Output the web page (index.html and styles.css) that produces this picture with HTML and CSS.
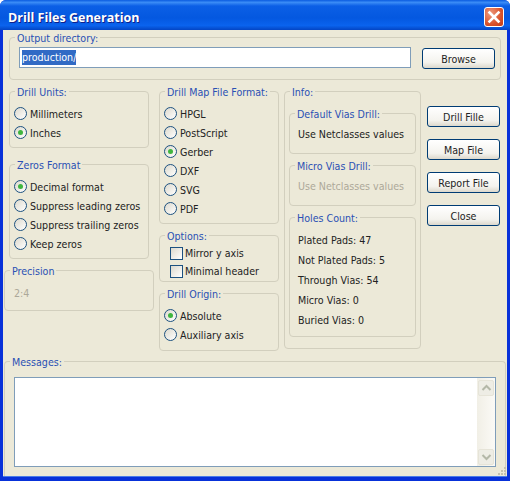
FILE: index.html
```html
<!DOCTYPE html>
<html lang="en">
<head>
    <meta charset="UTF-8">
    <title>Drill Files Generation</title>
    <link rel="stylesheet" href="styles.css">
</head>
<body>
    <div class="window">
        <div class="titlebar">
            <span class="title">Drill Files Generation</span>
            <span class="close-btn">
                <svg width="14" height="14" viewBox="0 0 14 14"><path d="M2.5 2.5 L11.5 11.5 M11.5 2.5 L2.5 11.5" stroke="#fff" stroke-width="2.6" stroke-linecap="square" fill="none"/></svg>
            </span>
        </div>
        <div class="content">
            <fieldset class="group output">
                <legend>Output directory:</legend>
                <div class="output-row">
                    <div class="path"><span class="selected">production/</span></div>
                    <button class="btn browse">Browse</button>
                </div>
            </fieldset>

            <div class="main">
                <div class="col col-1">
                    <fieldset class="group units">
                        <legend>Drill Units:</legend>
                        <div class="opt"><i class="radio"></i>Millimeters</div>
                        <div class="opt"><i class="radio on"></i>Inches</div>
                    </fieldset>
                    <fieldset class="group zeros">
                        <legend>Zeros Format</legend>
                        <div class="opt"><i class="radio on"></i>Decimal format</div>
                        <div class="opt"><i class="radio"></i>Suppress leading zeros</div>
                        <div class="opt"><i class="radio"></i>Suppress trailing zeros</div>
                        <div class="opt"><i class="radio"></i>Keep zeros</div>
                    </fieldset>
                    <fieldset class="group precision">
                        <legend>Precision</legend>
                        <div class="disabled">2:4</div>
                    </fieldset>
                </div>

                <div class="col col-2">
                    <fieldset class="group map">
                        <legend>Drill Map File Format:</legend>
                        <div class="opt"><i class="radio"></i>HPGL</div>
                        <div class="opt"><i class="radio"></i>PostScript</div>
                        <div class="opt"><i class="radio on"></i>Gerber</div>
                        <div class="opt"><i class="radio"></i>DXF</div>
                        <div class="opt"><i class="radio"></i>SVG</div>
                        <div class="opt"><i class="radio"></i>PDF</div>
                    </fieldset>
                    <fieldset class="group options">
                        <legend>Options:</legend>
                        <div class="chk"><i class="box"></i>Mirror y axis</div>
                        <div class="chk"><i class="box"></i>Minimal header</div>
                    </fieldset>
                    <fieldset class="group origin">
                        <legend>Drill Origin:</legend>
                        <div class="opt"><i class="radio on"></i>Absolute</div>
                        <div class="opt"><i class="radio"></i>Auxiliary axis</div>
                    </fieldset>
                </div>

                <fieldset class="group info">
                    <legend>Info:</legend>
                    <fieldset class="group vias">
                        <legend>Default Vias Drill:</legend>
                        <div class="value">Use Netclasses values</div>
                    </fieldset>
                    <fieldset class="group vias">
                        <legend>Micro Vias Drill:</legend>
                        <div class="value disabled">Use Netclasses values</div>
                    </fieldset>
                    <fieldset class="group holes">
                        <legend>Holes Count:</legend>
                        <div class="count">Plated Pads: 47</div>
                        <div class="count">Not Plated Pads: 5</div>
                        <div class="count">Through Vias: 54</div>
                        <div class="count">Micro Vias: 0</div>
                        <div class="count">Buried Vias: 0</div>
                    </fieldset>
                </fieldset>

                <div class="actions">
                    <button class="btn">Drill Fille</button>
                    <button class="btn">Map File</button>
                    <button class="btn">Report File</button>
                    <button class="btn">Close</button>
                </div>
            </div>

            <fieldset class="group messages">
                <legend>Messages:</legend>
                <div class="log">
                    <div class="scrollbar">
                        <span class="arrow">
                            <svg width="11" height="8" viewBox="0 0 11 8"><path d="M1.5 6 L5.5 2 L9.5 6" stroke="#b4b8a8" stroke-width="2" fill="none"/></svg>
                        </span>
                        <span class="arrow">
                            <svg width="11" height="8" viewBox="0 0 11 8"><path d="M1.5 2 L5.5 6 L9.5 2" stroke="#b4b8a8" stroke-width="2" fill="none"/></svg>
                        </span>
                    </div>
                </div>
            </fieldset>
            <svg class="grip" width="9" height="9" viewBox="0 0 9 9"><path d="M6 0h2v2h-2z M3 3h2v2h-2z M6 3h2v2h-2z M0 6h2v2h-2z M3 6h2v2h-2z M6 6h2v2h-2z" fill="#c4c1ae"/></svg>
        </div>
    </div>
</body>
</html>
```

FILE: styles.css
```css
*{margin:0;padding:0;box-sizing:border-box}
html,body{
    width: 510px;
    height: 481px;
    overflow: hidden;
}
body{
    font-family: "DejaVu Sans", sans-serif;
    font-stretch: condensed;
    font-size: 10.6px;
    color: #222;
}
.window{
    width: 510px;
    height: 481px;
    display: flex;
    flex-direction: column;
    background-color: #0831d9;
    border-radius: 6px 6px 0 0;
    padding: 0 3px 5px 3px;
}
.titlebar{
    height: 30px;
    margin: 0 -3px;
    padding: 4px 6px 0 8px;
    display: flex;
    align-items: center;
    justify-content: space-between;
    border-radius: 6px 6px 0 0;
    background: linear-gradient(to bottom, #0a5be0 0%, #3a8cf6 8%, #0b5fe6 20%, #0458e0 60%, #0a63ee 85%, #0345c4 100%);
}
.title{
    font-family: "Open Sans", sans-serif;
    font-stretch: normal;
    font-weight: bold;
    font-size: 12.5px;
    color: #fff;
    text-shadow: 1px 1px 0 #0f1f8a;
}
.close-btn{
    width: 20px;
    height: 20px;
    display: flex;
    align-items: center;
    justify-content: center;
    border: 1px solid #fff;
    border-radius: 3px;
    background: radial-gradient(circle at 30% 30%, #ee9a7e, #d9532c 60%, #c23a14);
}
.content{
    flex: 1;
    position: relative;
    background-color: #ece9d8;
    display: flex;
    flex-direction: column;
    min-height: 0;
    box-shadow: 0 1px 0 #4a7ce8;
}
.group{
    border: 1px solid #d2cfbe;
    border-radius: 4px;
    min-width: 0;
}
.group > legend{
    margin-left: 5px;
    padding: 1px 2px 0 2px;
    line-height: 14px;
    color: #2a50b4;
}
.output{
    height: 50px;
    margin: 0 6px;
    padding-top: 2px;
}
.output-row{
    display: flex;
    gap: 11px;
    margin-left: 9px;
}
.path{
    width: 392px;
    height: 21px;
    background-color: #fff;
    border: 1px solid #7f9db9;
    padding: 2px;
    line-height: 15px;
}
.selected{
    display: inline-block;
    background-color: #316ac5;
    color: #fff;
    height: 15px;
}
.btn{
    width: 73px;
    height: 21px;
    font: inherit;
    font-stretch: condensed;
    color: #222;
    border: 1px solid #003c74;
    border-radius: 3px;
    background: linear-gradient(to bottom, #fff 0%, #f4f3ee 70%, #dcd8cc 100%);
}
.browse{
    margin-top: 1px;
}
.main{
    display: flex;
    margin-top: 4px;
    padding-left: 1px;
    gap: 5px;
}
.col{
    display: flex;
    flex-direction: column;
}
.col-1{
    width: 150px;
}
.col-2{
    width: 120px;
    gap: 4px;
}
.units{
    height: 64px;
    margin: 0 5px;
    padding-top: 5px;
}
.zeros{
    height: 102px;
    margin: 9px 5px 0 5px;
    padding-top: 5px;
}
.precision{
    height: 48px;
    margin-top: 4px;
}
.precision .disabled{
    padding: 9px 0 0 9px;
}
.disabled{
    color: #aca899;
}
.map{
    height: 140px;
    padding-top: 5px;
}
.options{
    height: 54px;
    padding-top: 1px;
}
.origin{
    height: 65px;
    padding-top: 5px;
}
.opt{
    height: 19px;
    display: flex;
    align-items: center;
    padding-left: 4px;
}
.chk{
    height: 18px;
    display: flex;
    align-items: center;
    padding-left: 10px;
}
.radio{
    width: 13px;
    height: 13px;
    margin-right: 3px;
    border: 1px solid #1c5180;
    border-radius: 50%;
    background: linear-gradient(135deg, #dcd9cd, #fff);
    display: flex;
    align-items: center;
    justify-content: center;
}
.radio.on::after{
    content: "";
    width: 5px;
    height: 5px;
    border-radius: 50%;
    background-color: #3fb53f;
}
.box{
    width: 13px;
    height: 13px;
    margin-right: 2px;
    border: 1px solid #1c5180;
    background: linear-gradient(135deg, #dcd9cd, #fff);
}
.info{
    width: 137px;
    height: 265px;
    padding-top: 7px;
    display: flex;
    flex-direction: column;
}
.vias{
    height: 48px;
    margin: 0 4px 4px 4px;
}
.value{
    padding: 7px 0 0 8px;
}
.holes{
    height: 127px;
    margin: 0 4px;
    padding-top: 5px;
}
.count{
    height: 20px;
    line-height: 20px;
    padding-left: 8px;
}
.actions{
    display: flex;
    flex-direction: column;
    gap: 12px;
    margin: 22px 0 0 1px;
}
.messages{
    margin: 3px 1px 0 1px;
    flex: 1;
    border-bottom: none;
    border-radius: 4px 4px 0 0;
    padding-top: 8px;
}
.log{
    width: 482px;
    height: 90px;
    margin-left: 9px;
    background-color: #fff;
    border: 1px solid #7f9db9;
    display: flex;
    justify-content: flex-end;
}
.scrollbar{
    width: 18px;
    padding: 2px 1px 1px 1px;
    display: flex;
    flex-direction: column;
    justify-content: space-between;
    background: linear-gradient(to right, #f1efe6, #fbfaf6);
}
.arrow{
    width: 16px;
    height: 16px;
    display: flex;
    align-items: center;
    justify-content: center;
    background-color: #eeede5;
    border: 1px solid #e6e4d8;
    border-radius: 2px;
}
.grip{
    position: absolute;
    right: 0;
    bottom: 0;
}
```
